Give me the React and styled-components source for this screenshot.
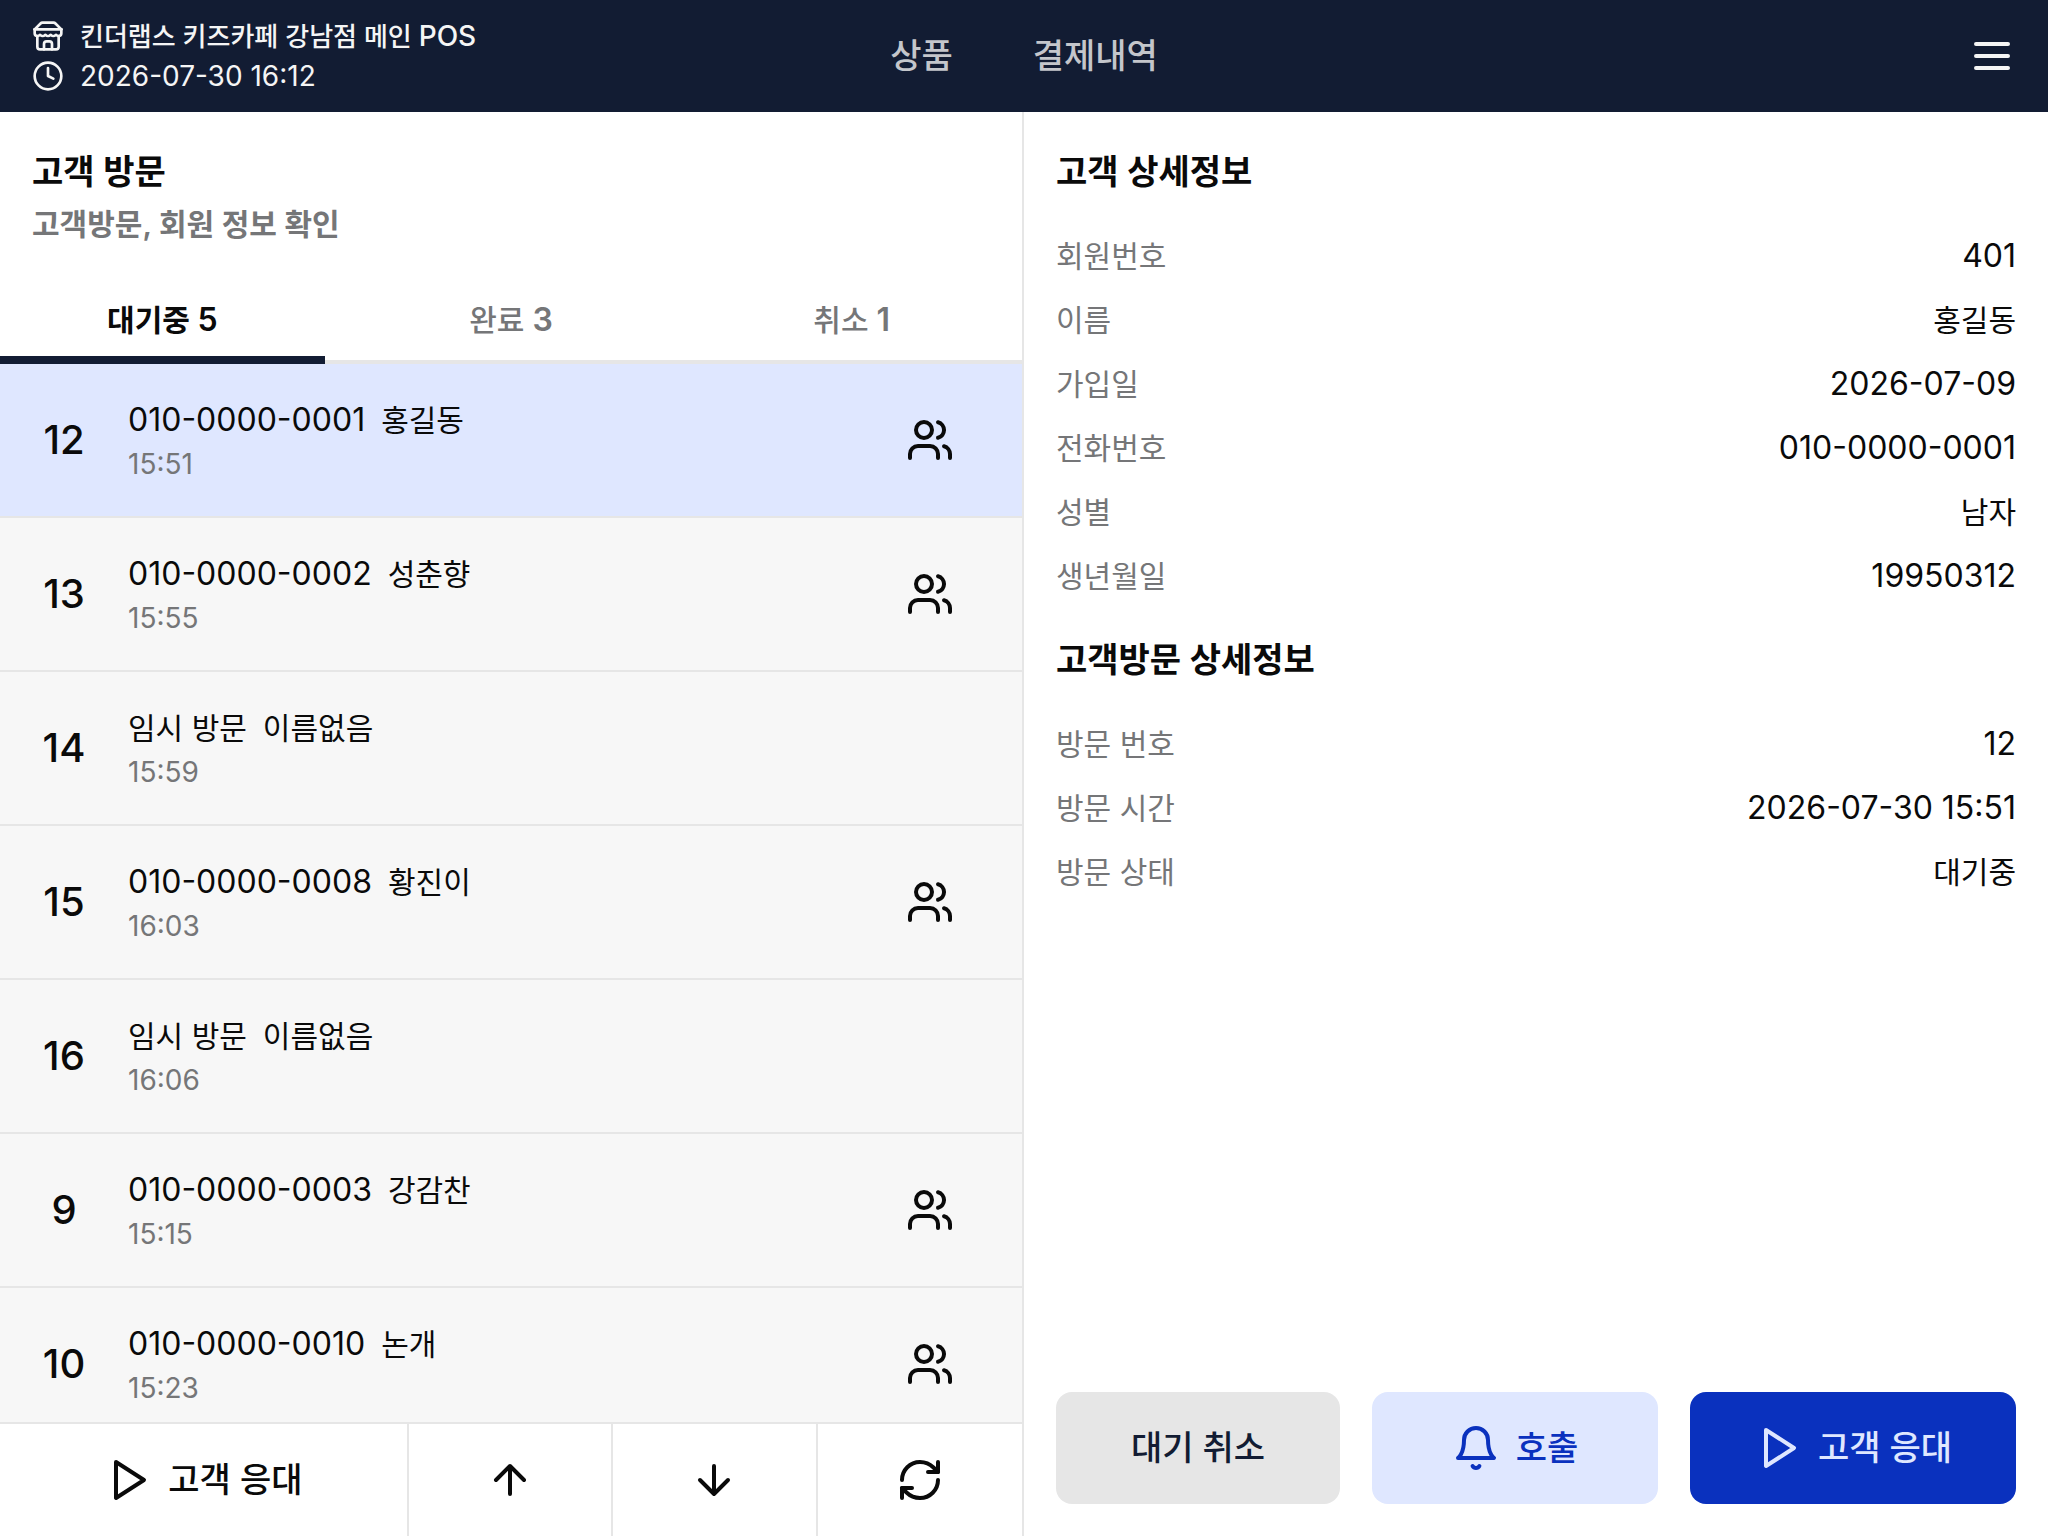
import React, { useState } from 'react';
import styled, { createGlobalStyle, css } from 'styled-components';

const Global = createGlobalStyle`
  *, *::before, *::after { box-sizing: border-box; }
  body {
    margin: 0;
    background: #ffffff;
    color: #0a0a0a;
    font-family: Inter, "Noto Sans CJK KR", sans-serif;
    font-size: 30px;
    line-height: 48px;
  }
  h2, p, dl, dt, dd, ul { margin: 0; padding: 0; }
  button { font: inherit; color: inherit; border: 0; background: none; padding: 0; cursor: pointer; }
`;

const Svg = styled.svg`
  display: block;
  flex: none;
  width: ${(p) => p.$size}px;
  height: ${(p) => p.$size}px;
  fill: none;
  stroke: currentColor;
  stroke-width: 2;
  stroke-linecap: round;
  stroke-linejoin: round;
`;

function Icon({ size = 48, children }) {
  return (
    <Svg $size={size} viewBox="0 0 24 24" aria-hidden="true">
      {children}
    </Svg>
  );
}

const StoreIcon = () => (
  <Icon size={32}>
    <path d="m2 7 4.41-4.41A2 2 0 0 1 7.83 2h8.34a2 2 0 0 1 1.42.59L22 7" />
    <path d="M4 12v8a2 2 0 0 0 2 2h12a2 2 0 0 0 2-2v-8" />
    <path d="M15 22v-4a2 2 0 0 0-2-2h-2a2 2 0 0 0-2 2v4" />
    <path d="M2 7h20" />
    <path d="M22 7v3a2 2 0 0 1-2 2a2.7 2.7 0 0 1-1.59-.63.7.7 0 0 0-.82 0A2.7 2.7 0 0 1 16 12a2.7 2.7 0 0 1-1.59-.63.7.7 0 0 0-.82 0A2.7 2.7 0 0 1 12 12a2.7 2.7 0 0 1-1.59-.63.7.7 0 0 0-.82 0A2.7 2.7 0 0 1 8 12a2.7 2.7 0 0 1-1.59-.63.7.7 0 0 0-.82 0A2.7 2.7 0 0 1 4 12a2 2 0 0 1-2-2V7" />
  </Icon>
);
const ClockIcon = () => (
  <Icon size={32}>
    <circle cx="12" cy="12" r="10" />
    <path d="M12 6v6l4 2" />
  </Icon>
);
const MenuIcon = () => (
  <Icon>
    <path d="M4 6h16M4 12h16M4 18h16" />
  </Icon>
);
const UsersIcon = () => (
  <Icon>
    <path d="M16 21v-2a4 4 0 0 0-4-4H6a4 4 0 0 0-4 4v2" />
    <circle cx="9" cy="7" r="4" />
    <path d="M22 21v-2a4 4 0 0 0-3-3.87" />
    <path d="M16 3.13a4 4 0 0 1 0 7.75" />
  </Icon>
);
const PlayIcon = () => (
  <Icon>
    <path d="M6 3l14 9-14 9z" />
  </Icon>
);
const UpIcon = () => (
  <Icon>
    <path d="m5 12 7-7 7 7M12 19V5" />
  </Icon>
);
const DownIcon = () => (
  <Icon>
    <path d="M12 5v14M19 12l-7 7-7-7" />
  </Icon>
);
const RefreshIcon = () => (
  <Icon>
    <path d="M3 12a9 9 0 0 1 9-9 9.75 9.75 0 0 1 6.74 2.74L21 8" />
    <path d="M21 3v5h-5" />
    <path d="M21 12a9 9 0 0 1-9 9 9.75 9.75 0 0 1-6.74-2.74L3 16" />
    <path d="M8 16H3v5" />
  </Icon>
);
const BellIcon = () => (
  <Icon>
    <path d="M6 8a6 6 0 0 1 12 0c0 7 3 9 3 9H3s3-2 3-9" />
    <path d="M10.3 21a1.94 1.94 0 0 0 3.4 0" />
  </Icon>
);

const Page = styled.div`
  display: flex;
  flex-direction: column;
  height: 100vh;
`;

const Header = styled.header`
  display: grid;
  grid-template-columns: 1fr auto 1fr;
  align-items: center;
  flex: none;
  padding: 16px 32px;
  background: #121c33;
  color: #f5f5f5;
`;

const StoreInfo = styled.div`
  font-size: 26px;
  line-height: 40px;
`;

const InfoLine = styled.div`
  display: flex;
  align-items: center;
  gap: 16px;
  height: 40px;
`;

const StoreName = styled.span`
  font-weight: 500;
`;

/* Latin digits set one step larger than the Hangul beside them */
const Num = styled.span`
  font-size: ${(p) => p.$size || 32}px;
`;

const Nav = styled.nav`
  display: flex;
  gap: 80px;
`;

const NavLink = styled.a`
  color: #c4c6cb;
  font-size: 34px;
  font-weight: 500;
  text-decoration: none;
`;

const MenuButton = styled.button`
  justify-self: end;
`;

const Body = styled.main`
  display: grid;
  grid-template-columns: 1fr 1fr;
  flex: 1;
  min-height: 0;
`;

const VisitPanel = styled.section`
  display: flex;
  flex-direction: column;
  min-height: 0;
  border-right: 2px solid #e6e6e6;
`;

const Intro = styled.div`
  padding: 32px;
`;

const Title = styled.h2`
  font-size: 34px;
  font-weight: 600;
  line-height: 56px;
`;

const Subtitle = styled.p`
  color: #757678;
  font-weight: 600;
`;

const Tabs = styled.div`
  display: grid;
  grid-template-columns: repeat(3, 1fr);
  flex: none;
  height: 84px;
  box-shadow: inset 0 -4px #e6e6e6;
`;

const TabCount = styled(Num)`
  font-weight: 600;
`;

const Tab = styled.button`
  padding-bottom: 4px;
  color: #757678;
  font-weight: 500;
  ${(p) =>
    p.$active &&
    css`
      margin-right: 16px;
      color: #0a0a0a;
      font-weight: 600;
      box-shadow: inset 0 -8px #121c33;
    `}
`;

const List = styled.ul`
  flex: 1;
  min-height: 0;
  overflow: hidden;
  list-style: none;
`;

const Row = styled.li`
  display: flex;
  align-items: center;
  padding: 32px 68px 32px 0;
  border-bottom: 2px solid #e6e6e6;
  background: ${(p) => (p.$selected ? '#dfe7ff' : '#f7f7f7')};
`;

const Order = styled.div`
  width: 128px;
  font-size: 40px;
  font-weight: 500;
  text-align: center;
`;

const Guest = styled.div`
  flex: 1;
`;

const GuestLine = styled.div`
  display: flex;
  gap: 16px;
`;

const Time = styled.div`
  color: #757678;
  font-size: 28px;
  line-height: 40px;
`;

const Toolbar = styled.div`
  display: grid;
  grid-template-columns: 2fr 1fr 1fr 1fr;
  flex: none;
  height: 114px;
  border-top: 2px solid #e6e6e6;
`;

const ToolButton = styled.button`
  display: flex;
  align-items: center;
  justify-content: center;
  gap: 16px;
  font-size: 34px;
  font-weight: 500;
  &:not(:last-child) { border-right: 2px solid #e6e6e6; }
`;

const DetailPanel = styled.section`
  display: flex;
  flex-direction: column;
  gap: 32px;
  padding: 32px;
`;

const Details = styled.dl`
  display: flex;
  flex-direction: column;
  gap: 16px;
`;

const Detail = styled.div`
  display: flex;
  justify-content: space-between;
  dt { color: #757678; }
`;

const Actions = styled.div`
  display: grid;
  grid-template-columns: 284fr 286fr 326fr;
  gap: 32px;
  margin-top: auto;
`;

const tones = {
  plain: ['#e6e6e6', '#121c33'],
  soft: ['#dfe7ff', '#0a31be'],
  solid: ['#0a31be', '#dfe7ff'],
};

const ActionButton = styled.button`
  display: flex;
  align-items: center;
  justify-content: center;
  gap: 16px;
  height: 112px;
  border-radius: 16px;
  background: ${(p) => tones[p.$tone][0]};
  color: ${(p) => tones[p.$tone][1]};
  font-size: 34px;
  font-weight: 500;
`;

const visits = [
  { no: 12, phone: '010-0000-0001', name: '홍길동', time: '15:51' },
  { no: 13, phone: '010-0000-0002', name: '성춘향', time: '15:55' },
  { no: 14, phone: null, name: '이름없음', time: '15:59' },
  { no: 15, phone: '010-0000-0008', name: '황진이', time: '16:03' },
  { no: 16, phone: null, name: '이름없음', time: '16:06' },
  { no: 9, phone: '010-0000-0003', name: '강감찬', time: '15:15' },
  { no: 10, phone: '010-0000-0010', name: '논개', time: '15:23' },
];

const tabs = [
  { label: '대기중', count: 5 },
  { label: '완료', count: 3 },
  { label: '취소', count: 1 },
];

const customer = [
  ['회원번호', <Num>401</Num>],
  ['이름', '홍길동'],
  ['가입일', <Num>2026-07-09</Num>],
  ['전화번호', <Num>010-0000-0001</Num>],
  ['성별', '남자'],
  ['생년월일', <Num>19950312</Num>],
];

const visitInfo = [
  ['방문 번호', <Num>12</Num>],
  ['방문 시간', <Num>2026-07-30 15:51</Num>],
  ['방문 상태', '대기중'],
];

function DetailList({ items }) {
  return (
    <Details>
      {items.map(([label, value]) => (
        <Detail key={label}>
          <dt>{label}</dt>
          <dd>{value}</dd>
        </Detail>
      ))}
    </Details>
  );
}

export default function App() {
  const [tab, setTab] = useState(0);
  const [selected, setSelected] = useState(12);
  return (
    <Page>
      <Global />
      <Header>
        <StoreInfo>
          <InfoLine>
            <StoreIcon />
            <StoreName>킨더랩스 키즈카페 강남점 메인 <Num $size={28}>POS</Num></StoreName>
          </InfoLine>
          <InfoLine>
            <ClockIcon />
            <Num $size={28}>2026-07-30 16:12</Num>
          </InfoLine>
        </StoreInfo>
        <Nav>
          <NavLink href="#products">상품</NavLink>
          <NavLink href="#payments">결제내역</NavLink>
        </Nav>
        <MenuButton type="button" aria-label="메뉴">
          <MenuIcon />
        </MenuButton>
      </Header>
      <Body>
        <VisitPanel>
          <Intro>
            <Title>고객 방문</Title>
            <Subtitle>고객방문, 회원 정보 확인</Subtitle>
          </Intro>
          <Tabs role="tablist">
            {tabs.map((t, i) => (
              <Tab
                key={t.label}
                type="button"
                role="tab"
                aria-selected={tab === i}
                $active={tab === i}
                onClick={() => setTab(i)}
              >
                {t.label} <TabCount>{t.count}</TabCount>
              </Tab>
            ))}
          </Tabs>
          <List>
            {visits.map((v) => (
              <Row key={v.no} $selected={v.no === selected} onClick={() => setSelected(v.no)}>
                <Order>{v.no}</Order>
                <Guest>
                  <GuestLine>
                    {v.phone ? <Num>{v.phone}</Num> : <span>임시 방문</span>}
                    <span>{v.name}</span>
                  </GuestLine>
                  <Time>{v.time}</Time>
                </Guest>
                {v.phone && <UsersIcon />}
              </Row>
            ))}
          </List>
          <Toolbar>
            <ToolButton type="button">
              <PlayIcon />
              고객 응대
            </ToolButton>
            <ToolButton type="button" aria-label="위로">
              <UpIcon />
            </ToolButton>
            <ToolButton type="button" aria-label="아래로">
              <DownIcon />
            </ToolButton>
            <ToolButton type="button" aria-label="새로고침">
              <RefreshIcon />
            </ToolButton>
          </Toolbar>
        </VisitPanel>
        <DetailPanel>
          <Title>고객 상세정보</Title>
          <DetailList items={customer} />
          <Title>고객방문 상세정보</Title>
          <DetailList items={visitInfo} />
          <Actions>
            <ActionButton type="button" $tone="plain">대기 취소</ActionButton>
            <ActionButton type="button" $tone="soft">
              <BellIcon />
              호출
            </ActionButton>
            <ActionButton type="button" $tone="solid">
              <PlayIcon />
              고객 응대
            </ActionButton>
          </Actions>
        </DetailPanel>
      </Body>
    </Page>
  );
}
